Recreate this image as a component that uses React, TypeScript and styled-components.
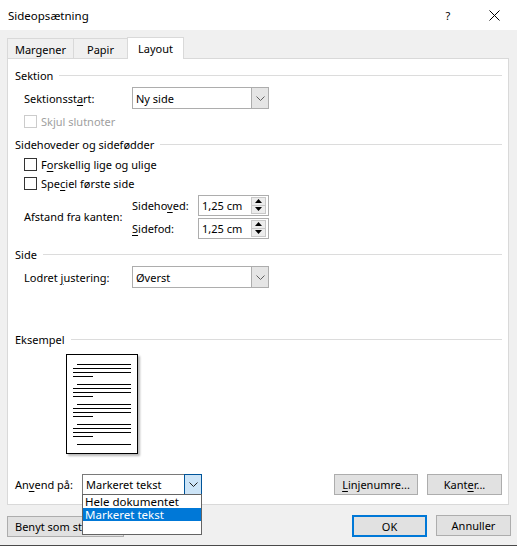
import React from "react";
import styled, { createGlobalStyle } from "styled-components";

const Global = createGlobalStyle`
  html, body { margin: 0; padding: 0; background: #f0f0f0; }
  body {
    font-family: "Segoe UI", "Noto Sans", "Liberation Sans", sans-serif;
    font-size: 11px;
    color: #000;
  }
  * { box-sizing: border-box; }
  u { text-decoration-thickness: 1px; text-underline-offset: 2px; }
`;

const Window = styled.div`
  width: 517px;
  height: 546px;
  background: #f0f0f0;
  border-bottom: 1px solid #4a4a4a;
  display: flex;
  flex-direction: column;
  overflow: hidden;
`;

const TitleBar = styled.div`
  height: 30px;
  flex-shrink: 0;
  background: #fff;
  display: flex;
  align-items: center;
  padding-left: 8px;
`;

const Title = styled.div`
  flex: 1;
  font-size: 11.5px;
`;

const TitleButton = styled.div`
  width: 46px;
  height: 30px;
  display: flex;
  align-items: center;
  justify-content: center;
  font-size: 11px;
`;

const TabStrip = styled.div`
  display: flex;
  align-items: flex-end;
  height: 21px;
  margin-top: 7px;
  padding-left: 7px;
  flex-shrink: 0;
`;

const Tab = styled.div<{ $active?: boolean; $w: number; $first?: boolean }>`
  width: ${(p) => p.$w}px;
  height: ${(p) => (p.$active ? 22 : 20)}px;
  margin-left: ${(p) => (p.$first ? 0 : -1)}px;
  margin-bottom: ${(p) => (p.$active ? -1 : 0)}px;
  border: 1px solid #d9d9d9;
  border-bottom: none;
  background: ${(p) => (p.$active ? "#fff" : "#f0f0f0")};
  position: relative;
  z-index: ${(p) => (p.$active ? 2 : 1)};
  display: flex;
  align-items: center;
  justify-content: center;
  padding-top: ${(p) => (p.$active ? 0 : 2)}px;
`;

const Panel = styled.div`
  margin-left: 7px;
  width: 502px;
  height: 447px;
  flex-shrink: 0;
  background: #fff;
  border: 1px solid #d9d9d9;
  display: flex;
  flex-direction: column;
`;

const SectionHeader = styled.div<{ $mt: number }>`
  margin-top: ${(p) => p.$mt}px;
  height: 16px;
  display: flex;
  align-items: center;
  gap: 6px;
  padding: 0 6px 0 7px;
  &::after {
    content: "";
    flex: 1;
    height: 1px;
    background: #dcdcdc;
  }
`;

const Row = styled.div<{ $mt: number; $h: number; $pl?: number; $pr?: number }>`
  margin-top: ${(p) => p.$mt}px;
  height: ${(p) => p.$h}px;
  display: flex;
  align-items: center;
  padding-left: ${(p) => p.$pl ?? 16}px;
  padding-right: ${(p) => p.$pr ?? 0}px;
  flex-shrink: 0;
`;

const Label = styled.span<{ $w: number }>`
  width: ${(p) => p.$w}px;
  flex-shrink: 0;
  white-space: nowrap;
`;

const Select = styled.div<{ $w: number; $h: number; $open?: boolean }>`
  position: relative;
  width: ${(p) => p.$w}px;
  height: ${(p) => p.$h}px;
  border: 1px solid ${(p) => (p.$open ? "#7a7a7a" : "#adadad")};
  background: #fff;
  display: flex;
  align-items: center;
`;

const SelectValue = styled.span`
  flex: 1;
  padding-left: 3px;
  white-space: nowrap;
`;

const SelectButton = styled.div<{ $open?: boolean }>`
  width: ${(p) => (p.$open ? 18 : 17)}px;
  height: ${(p) => (p.$open ? "calc(100% + 2px)" : "100%")};
  margin: ${(p) => (p.$open ? "-1px -1px -1px 0" : "0")};
  border-left: 1px solid #adadad;
  ${(p) =>
    p.$open
      ? "border: 1px solid #005499; background: #cce4f7;"
      : "background: #e5e5e5;"}
  display: flex;
  align-items: center;
  justify-content: center;
`;

const DropList = styled.div`
  position: absolute;
  top: 19px;
  left: -1px;
  width: 120px;
  height: 41px;
  background: #fff;
  border: 1px solid #646464;
  z-index: 10;
`;

const DropItem = styled.div<{ $selected?: boolean }>`
  height: 13px;
  line-height: 13px;
  padding-left: 2px;
  font-size: 11.5px;
  white-space: nowrap;
  background: ${(p) => (p.$selected ? "#0078d7" : "transparent")};
  color: ${(p) => (p.$selected ? "#fff" : "#000")};
`;

const CheckRow = styled.label<{ $disabled?: boolean }>`
  display: flex;
  align-items: center;
  color: ${(p) => (p.$disabled ? "#a0a0a0" : "#000")};
`;

const Box = styled.span<{ $disabled?: boolean }>`
  width: 13px;
  height: 13px;
  border: 1px solid ${(p) => (p.$disabled ? "#cccccc" : "#333333")};
  background: #fff;
  margin-right: 4px;
  flex-shrink: 0;
`;

const DistanceBlock = styled.div`
  margin-top: 5px;
  height: 43px;
  display: flex;
  align-items: center;
  padding-left: 16px;
  flex-shrink: 0;
`;

const SpinColumn = styled.div`
  display: flex;
  flex-direction: column;
  gap: 2px;
`;

const SpinRow = styled.div`
  display: flex;
  align-items: center;
  height: 21px;
`;

const SpinBox = styled.div`
  width: 71px;
  height: 21px;
  border: 1px solid #adadad;
  background: #fff;
  display: flex;
  align-items: center;
`;

const SpinValue = styled.span`
  flex: 1;
  padding-left: 3px;
`;

const SpinButtons = styled.div`
  width: 15px;
  height: 17px;
  margin-right: 2px;
  display: flex;
  flex-direction: column;
  border: 1px solid #c8c8c8;
  background: #ececec;
`;

const SpinHalf = styled.div<{ $top?: boolean }>`
  flex: 1;
  display: flex;
  align-items: center;
  justify-content: center;
  border-bottom: ${(p) => (p.$top ? "1px solid #c8c8c8" : "none")};
`;

const PreviewPage = styled.div`
  margin: 7px 0 0 58px;
  width: 72px;
  height: 100px;
  border: 1px solid #000;
  background: #fff;
  box-shadow: 2px 2px 2px rgba(0, 0, 0, 0.28);
  flex-shrink: 0;
  display: flex;
`;

const Spacer = styled.div`
  flex: 1;
`;

const Button = styled.div<{ $w: number; $default?: boolean }>`
  width: ${(p) => p.$w}px;
  height: ${(p) => (p.$default ? 22 : 21)}px;
  background: #e1e1e1;
  border: ${(p) => (p.$default ? "2px solid #0078d7" : "1px solid #adadad")};
  display: flex;
  align-items: center;
  justify-content: ${(p) => (p.$w > 100 ? "flex-start" : "center")};
  padding-left: ${(p) => (p.$w > 100 ? 7 : 0)}px;
  white-space: nowrap;
  overflow: hidden;
  flex-shrink: 0;
`;

const ButtonGroup = styled.div<{ $gap: number }>`
  display: flex;
  gap: ${(p) => p.$gap}px;
`;

const BottomRow = styled.div`
  margin-top: 10px;
  height: 22px;
  display: flex;
  align-items: center;
  padding: 0 6px 0 7px;
  flex-shrink: 0;
`;

const Chevron = ({ color = "#606060" }: { color?: string }) => (
  <svg width="9" height="5" viewBox="0 0 9 5">
    <path d="M0.5 0.5 L4.5 4.5 L8.5 0.5" fill="none" stroke={color} strokeWidth="1" />
  </svg>
);

const Triangle = ({ up }: { up?: boolean }) => (
  <svg width="7" height="4" viewBox="0 0 7 4">
    {up ? <path d="M0 4 L3.5 0 L7 4 Z" fill="#000" /> : <path d="M0 0 L3.5 4 L7 0 Z" fill="#000" />}
  </svg>
);

const PageLines = () => {
  const groups = [9, 29, 49, 69];
  const lines: { x1: number; x2: number; y: number }[] = [];
  groups.forEach((g) => {
    lines.push({ x1: 10, x2: 64, y: g });
    lines.push({ x1: 6, x2: 64, y: g + 4 });
    lines.push({ x1: 6, x2: 64, y: g + 8 });
    lines.push({ x1: 6, x2: 26, y: g + 12 });
  });
  lines.push({ x1: 10, x2: 64, y: 89 });
  return (
    <svg width="70" height="98" viewBox="0 0 70 98">
      {lines.map((l, i) => (
        <line key={i} x1={l.x1} x2={l.x2} y1={l.y + 0.5} y2={l.y + 0.5} stroke="#000" strokeWidth="1" />
      ))}
    </svg>
  );
};

export default function App() {
  return (
    <>
      <Global />
      <Window>
        <TitleBar>
          <Title>Sideopsætning</Title>
          <TitleButton>?</TitleButton>
          <TitleButton>
            <svg width="11" height="11" viewBox="0 0 11 11">
              <path d="M0.5 0.5 L10.5 10.5 M10.5 0.5 L0.5 10.5" stroke="#000" strokeWidth="1" />
            </svg>
          </TitleButton>
        </TitleBar>

        <TabStrip>
          <Tab $w={67} $first>Margener</Tab>
          <Tab $w={55}>Papir</Tab>
          <Tab $w={57} $active>Layout</Tab>
        </TabStrip>

        <Panel>
          <SectionHeader $mt={8}>Sektion</SectionHeader>
          <Row $mt={4} $h={22}>
            <Label $w={108}>Sektionsst<u>a</u>rt:</Label>
            <Select $w={137} $h={22}>
              <SelectValue>Ny side</SelectValue>
              <SelectButton>
                <Chevron />
              </SelectButton>
            </Select>
          </Row>
          <Row $mt={5} $h={14}>
            <CheckRow $disabled>
              <Box $disabled />
              Skjul slutnoter
            </CheckRow>
          </Row>

          <SectionHeader $mt={8}>Sidehoveder og sidefødder</SectionHeader>
          <Row $mt={5} $h={14}>
            <CheckRow>
              <Box />
              F<u>o</u>rskellig lige og ulige
            </CheckRow>
          </Row>
          <Row $mt={5} $h={14}>
            <CheckRow>
              <Box />
              Spe<u>c</u>iel første side
            </CheckRow>
          </Row>
          <DistanceBlock>
            <Label $w={108}>Afstand fra kanten:</Label>
            <SpinColumn>
              <SpinRow>
                <Label $w={66}>Sideho<u>v</u>ed:</Label>
                <SpinBox>
                  <SpinValue>1,25 cm</SpinValue>
                  <SpinButtons>
                    <SpinHalf $top>
                      <Triangle up />
                    </SpinHalf>
                    <SpinHalf>
                      <Triangle />
                    </SpinHalf>
                  </SpinButtons>
                </SpinBox>
              </SpinRow>
              <SpinRow>
                <Label $w={66}>
                  <u>S</u>idefod:
                </Label>
                <SpinBox>
                  <SpinValue>1,25 cm</SpinValue>
                  <SpinButtons>
                    <SpinHalf $top>
                      <Triangle up />
                    </SpinHalf>
                    <SpinHalf>
                      <Triangle />
                    </SpinHalf>
                  </SpinButtons>
                </SpinBox>
              </SpinRow>
            </SpinColumn>
          </DistanceBlock>

          <SectionHeader $mt={8}>Side</SectionHeader>
          <Row $mt={4} $h={22}>
            <Label $w={108}>
              Lodret <u>j</u>ustering:
            </Label>
            <Select $w={137} $h={22}>
              <SelectValue>Øverst</SelectValue>
              <SelectButton>
                <Chevron />
              </SelectButton>
            </Select>
          </Row>

          <SectionHeader $mt={43}>Eksempel</SectionHeader>
          <PreviewPage>
            <PageLines />
          </PreviewPage>

          <Row $mt={20} $h={21} $pl={7} $pr={6}>
            <Label $w={67}>
              An<u>v</u>end på:
            </Label>
            <Select $w={120} $h={21} $open>
              <SelectValue>Markeret tekst</SelectValue>
              <SelectButton $open>
                <Chevron color="#202020" />
              </SelectButton>
              <DropList>
                <DropItem>Hele dokumentet</DropItem>
                <DropItem $selected>Markeret tekst</DropItem>
              </DropList>
            </Select>
            <Spacer />
            <ButtonGroup $gap={9}>
              <Button $w={84}>
                <u>L</u>injenumre...
              </Button>
              <Button $w={75}>
                Kant<u>e</u>r...
              </Button>
            </ButtonGroup>
          </Row>
        </Panel>

        <BottomRow>
          <Button $w={117}>Benyt som standard</Button>
          <Spacer />
          <ButtonGroup $gap={9}>
            <Button $w={75} $default>
              OK
            </Button>
            <Button $w={75}>Annuller</Button>
          </ButtonGroup>
        </BottomRow>
      </Window>
    </>
  );
}
